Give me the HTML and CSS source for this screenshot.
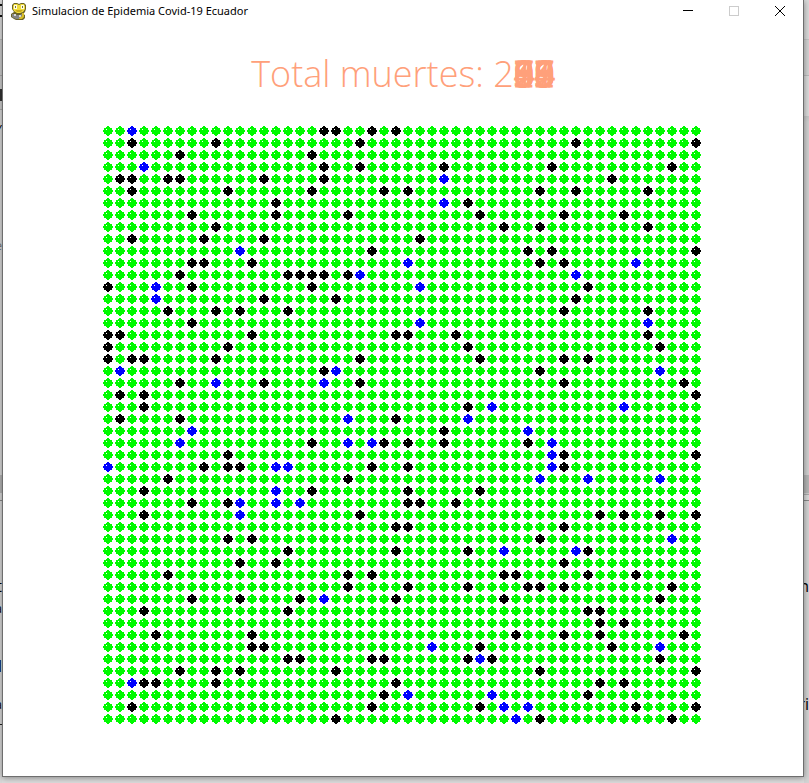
FILE: index.html
```html
<!DOCTYPE html>
<html lang="es">
<head>
<meta charset="utf-8">
<title>Simulacion de Epidemia Covid-19 Ecuador</title>
<link rel="stylesheet" href="styles.css">
</head>
<body>
<div class="desktop">
  <div class="behind behind-left" aria-hidden="true">
    <span class="scrap scrap-small l-y">Y</span>
    <span class="scrap scrap-faint l-c">e</span>
    <span class="scrap l-t">t</span>
    <span class="scrap scrap-small l-a">a</span>
    <span class="scrap scrap-bold l-m">M</span>
    <span class="scrap scrap-small l-a2">a</span>
  </div>
  <main class="window">
    <header class="titlebar">
      <svg class="app-icon" viewBox="0 0 16 18" aria-hidden="true">
        <path d="M3 1h3l2 1 2-1h3l2 2v4l-1 3-2 2 2 1v3l-2 2H5l-2-1-3-2v-3l3-2-2-3V3z" fill="#6b6326"/>
        <path d="M3 2h3l2 1 2-1h3l1 2v3l-2 3-3 1H6L3 9 2 7V4z" fill="#f0dc3c"/>
        <path d="M3 3h3v4H3zm7 0h3v4h-3z" fill="#fffbe0"/>
        <path d="M4 4h1v2H4zm7 0h1v2h-1z" fill="#77753c"/>
        <path d="M4 8h8l-2 2H6z" fill="#c9ac1c"/>
        <path d="M1 12h3l2 1h3l3-2v4l-3 2H5l-4-2z" fill="#858585"/>
        <path d="M3 12h2v2H3zm5 1h2v2H8z" fill="#d8d8d8"/>
        <path d="M11 11h2v4l-2 2H8v-1l3-2z" fill="#d6bd27"/>
      </svg>
      <h1 class="caption">Simulacion de Epidemia Covid-19 Ecuador</h1>
      <div class="controls">
        <button type="button" class="control" aria-label="Minimizar"><svg viewBox="0 0 10 10"><path d="M0 4.500h10"/></svg></button>
        <button type="button" class="control" aria-label="Maximizar" disabled><svg viewBox="0 0 10 10"><path d="M.5.5h9v9h-9z"/></svg></button>
        <button type="button" class="control" aria-label="Cerrar"><svg viewBox="0 0 10 10"><path class="smooth" d="M0 0l10 10M10 0L0 10"/></svg></button>
      </div>
    </header>
    <p class="total">Total muertes: 2<span class="overprint"></span><span class="overprint"></span></p>
    <svg class="board" viewBox="0 0 600 600" role="img" aria-label="Poblacion">
      <defs>
        <path id="dot" d="M5 1h2v1h1v1h2v2h1v2h-1v2h-2v1h-1v1h-2v-1h-1v-1h-2v-2h-1v-2h1v-2h2v-1h1z"/>
      </defs>
    </svg>
  </main>
  <div class="behind behind-right" aria-hidden="true">
    <span class="scrap r-n">n</span>
    <span class="scrap r-ri">ri</span>
  </div>
</div>
<script src="board.js"></script>
</body>
</html>
```
FILE: styles.css
```css
* { box-sizing: border-box; }

body {
  margin: 0;
  background: #d6d6d6;
  font-family: "Open Sans", "Noto Sans", sans-serif;
}

.desktop {
  display: grid;
  grid-template-columns: 2px 1fr 5px;
  min-height: 100vh;
  background: linear-gradient(#e0e0e0, #dcdcdc);
}

.behind {
  position: relative;
  overflow: hidden;
}

.behind-left {
  background: linear-gradient(#ddd 0 4px, #111 4px 6px, #ddd 6px 15px, #111 15px 17px, #ddd 17px 39px, #bbb 39px 40px, #ccc 40px 75px, #aaa 75px 76px, #ccc 76px 89px, #333 89px 101px, #ccc 101px 109px, #aaa 109px 110px, #d8d8d8 110px 475px, #b5b5b5 475px 493px, #d8d8d8 493px 500px, #888 500px 501px, #d8d8d8 501px 724px, #222 724px 725px, #d8d8d8 725px);
}

.behind-right {
  background: linear-gradient(#d9d9d9 0 39px, #c4c4c4 39px 40px, #d2d2d2 40px 75px, #bbb 75px 76px, #dadada 76px 116px, #c6c6c6 116px, #d0d0d0 122px 475px, #b5b5b5 475px 493px, #ccc 493px 494px, #aaa 494px 495px, #d8d8d8 495px 500px, #888 500px 501px, #d3d3d3 501px);
}

.scrap {
  position: absolute;
  right: 0;
  font-size: 16px;
  line-height: 20px;
  color: #000;
}

.scrap-small { font-size: 12px; }
.scrap-faint { font-size: 12px; color: #777; }
.scrap-bold { font-weight: 700; }
.l-y { top: 120px; }
.l-c { top: 236px; }
.l-t { top: 576px; }
.l-a { top: 599px; }
.l-m { top: 656px; }
.l-a2 { top: 695px; }
.r-n { top: 576px; }
.r-ri { top: 694px; }

.window {
  display: flex;
  flex-direction: column;
  align-items: center;
  margin-bottom: 6px;
  padding-bottom: 51px;
  background: #fff;
  border: 1px solid #6e6e6e;
  border-top: 0;
  box-shadow: 0 1px 6px rgba(0, 0, 0, .4);
  z-index: 1;
}

.titlebar {
  display: flex;
  align-items: center;
  align-self: stretch;
  height: 22px;
  padding-left: 8px;
}

.app-icon {
  width: 16px;
  height: 18px;
  margin-right: 5px;
}

.caption {
  flex: 1;
  margin: 0;
  font: 400 11px/20px "Noto Sans", "Open Sans", sans-serif;
  color: #000;
}

.controls { display: flex; }

.control {
  display: grid;
  place-items: center;
  width: 46px;
  height: 20px;
  padding: 0;
  border: 0;
  background: none;
}

.control svg {
  width: 10px;
  height: 10px;
  overflow: visible;
  fill: none;
  stroke: #000;
  shape-rendering: crispEdges;
}

.control .smooth { shape-rendering: auto; }
.control:disabled svg { stroke: #ccc; }

.total {
  display: flex;
  margin: 27px 0 26px;
  font-size: 36px;
  font-weight: 300;
  line-height: 50px;
  color: #ffa07a;
  white-space: pre;
}

.overprint {
  display: grid;
  -webkit-text-stroke: 1px #ffa07a;
}

.overprint span {
  grid-area: 1 / 1;
}

.board {
  width: 600px;
  max-width: 100%;
  margin-right: 2px;
  shape-rendering: crispEdges;
}

.healthy { fill: #00fa00; }
.infected { fill: #00f; }
.dead { fill: #000; }
.glint { fill: #fff; }
```
FILE: board.js
```js
// One entry per row: columns of the dead, then columns of the infected.
const rows = [
  [[18,19,22,24],[2]],
  [[2,9,21,39,49],[]],
  [[6,17],[]],
  [[18,21,28,37,47],[3]],
  [[1,2,5,6,13,18,42],[28]],
  [[2,10,17,23,25,36,39,45],[]],
  [[14,30],[28]],
  [[7,14,20,31,38,43],[]],
  [[9,33,36,45],[]],
  [[2,8,13,26],[]],
  [[22,35,37,49],[11]],
  [[7,8,12,36,38],[25,44]],
  [[6,15,16,17,18,20],[21,39]],
  [[0,7,17,40],[4,26]],
  [[13,19,39],[4]],
  [[5,9,11,15,38,45],[]],
  [[7],[26,45]],
  [[0,1,12,24,25,29,45],[]],
  [[0,10,30,46],[]],
  [[0,2,3,9,21,31,38,40],[]],
  [[18,36],[1,19,46]],
  [[6,13,21,38,48],[9,18]],
  [[1,3,49],[]],
  [[3,30],[32,43]],
  [[1,6,24],[20,30]],
  [[28],[7,35]],
  [[17,23,25,28,35],[6,20,22,37]],
  [[10,38,49],[37]],
  [[8,10,11,22,25,38],[0,14,15,37]],
  [[5,20],[36,40,46]],
  [[3,17,25,31],[14]],
  [[7,10,25,26,29],[11,14,16]],
  [[3,21,41,43,46,49],[11]],
  [[24,25,38],[]],
  [[10,12,36],[47]],
  [[15,24,30,40],[33,39]],
  [[11,14,38],[]],
  [[5,20,22,33,34,40,44],[]],
  [[20,25,30,35,36,38,47],[]],
  [[7,11,16,24,33,46],[18]],
  [[3,15,40,41],[]],
  [[41,43],[]],
  [[4,12,34,38,41,48],[]],
  [[12,13,31,42],[27,46]],
  [[15,16,22,23,30,32,46],[31]],
  [[6,9,11,19,36,49],[]],
  [[3,4,9,24,41,43],[2]],
  [[23,40],[25,32]],
  [[2,22,31,44,49],[33,35]],
  [[19,36,47],[34]]
];

const CELL = 12;
const NS = "http://www.w3.org/2000/svg";
const board = document.querySelector(".board");

function add(name, attributes) {
  const node = document.createElementNS(NS, name);
  for (const key in attributes) node.setAttribute(key, attributes[key]);
  board.appendChild(node);
}

rows.forEach(([dead, infected], row) => {
  for (let col = 0; col < 50; col++) {
    const state = dead.includes(col) ? "dead" : infected.includes(col) ? "infected" : "healthy";
    const x = col * CELL;
    const y = row * CELL;
    add("use", { href: "#dot", x, y, class: state });
    add("rect", { x: x + 4, y: y + 4, width: 1, height: 1, class: "glint" });
  }
});

document.querySelectorAll(".overprint").forEach((slot) => {
  for (let digit = 0; digit < 10; digit++) {
    const span = document.createElement("span");
    span.textContent = digit;
    slot.appendChild(span);
  }
});
```
